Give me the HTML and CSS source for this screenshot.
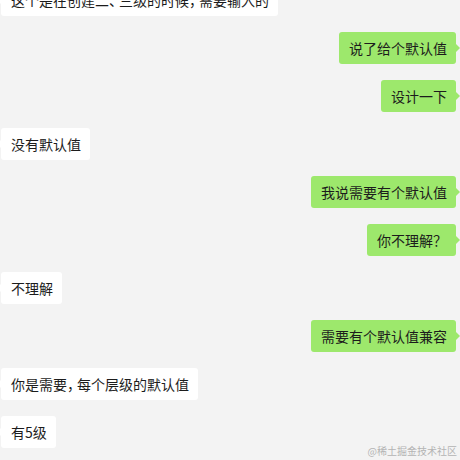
FILE: index.html
```html
<!DOCTYPE html>
<html lang="zh-CN">
<head>
    <meta charset="UTF-8" />
    <meta name="viewport" content="width=device-width, initial-scale=1.0"/>
    <title>聊天记录</title>
    <link rel="stylesheet" href="styles.css">
</head>
<body>
    <div class="chat">
        <div class="msg left">这个是在创建二<span class="punct">、</span>三级的时候<span class="punct">，</span>需要输入的</div>
        <div class="msg right">说了给个默认值</div>
        <div class="msg right">设计一下</div>
        <div class="msg left">没有默认值</div>
        <div class="msg right">我说需要有个默认值</div>
        <div class="msg right">你不理解？</div>
        <div class="msg left">不理解</div>
        <div class="msg right">需要有个默认值兼容</div>
        <div class="msg left">你是需要<span class="punct">，</span>每个层级的默认值</div>
        <div class="msg left">有5级</div>
    </div>
    <div class="watermark">@稀土掘金技术社区</div>
</body>
</html>
```

FILE: styles.css
```css
body {
    font-family: "Noto Sans CJK SC", "Noto Sans", sans-serif;
    background-color: #f3f3f3;
    color: #1c1c1c;
    margin: 0;
    padding: 0;
    width: 460px;
    height: 460px;
    overflow: hidden;
    position: relative;
}

.chat {
    display: flex;
    flex-direction: column;
    gap: 16px;
    margin-top: -16px;
    padding: 0 4px 0 1px;
}

.msg {
    position: relative;
    font-size: 14px;
    line-height: 18px;
    padding: 7px 9px 7px 10px;
    border-radius: 3px;
    white-space: nowrap;
}

.msg::after {
    content: "";
    position: absolute;
    top: 12px;
    width: 0;
    height: 0;
    border-top: 4px solid transparent;
    border-bottom: 4px solid transparent;
}

/* punctuation in the original font is narrower */
.punct {
    font-feature-settings: "halt";
    padding-right: 3px;
}

.left {
    align-self: flex-start;
    background-color: #ffffff;
}

.left::after {
    left: -4px;
    border-right: 4px solid #ffffff;
}

.right {
    align-self: flex-end;
    background-color: #9de86c;
}

.right::after {
    right: -4px;
    border-left: 4px solid #9de86c;
}

.watermark {
    position: absolute;
    right: 3px;
    bottom: 2px;
    font-size: 10px;
    color: #b4b4b4;
}
```
